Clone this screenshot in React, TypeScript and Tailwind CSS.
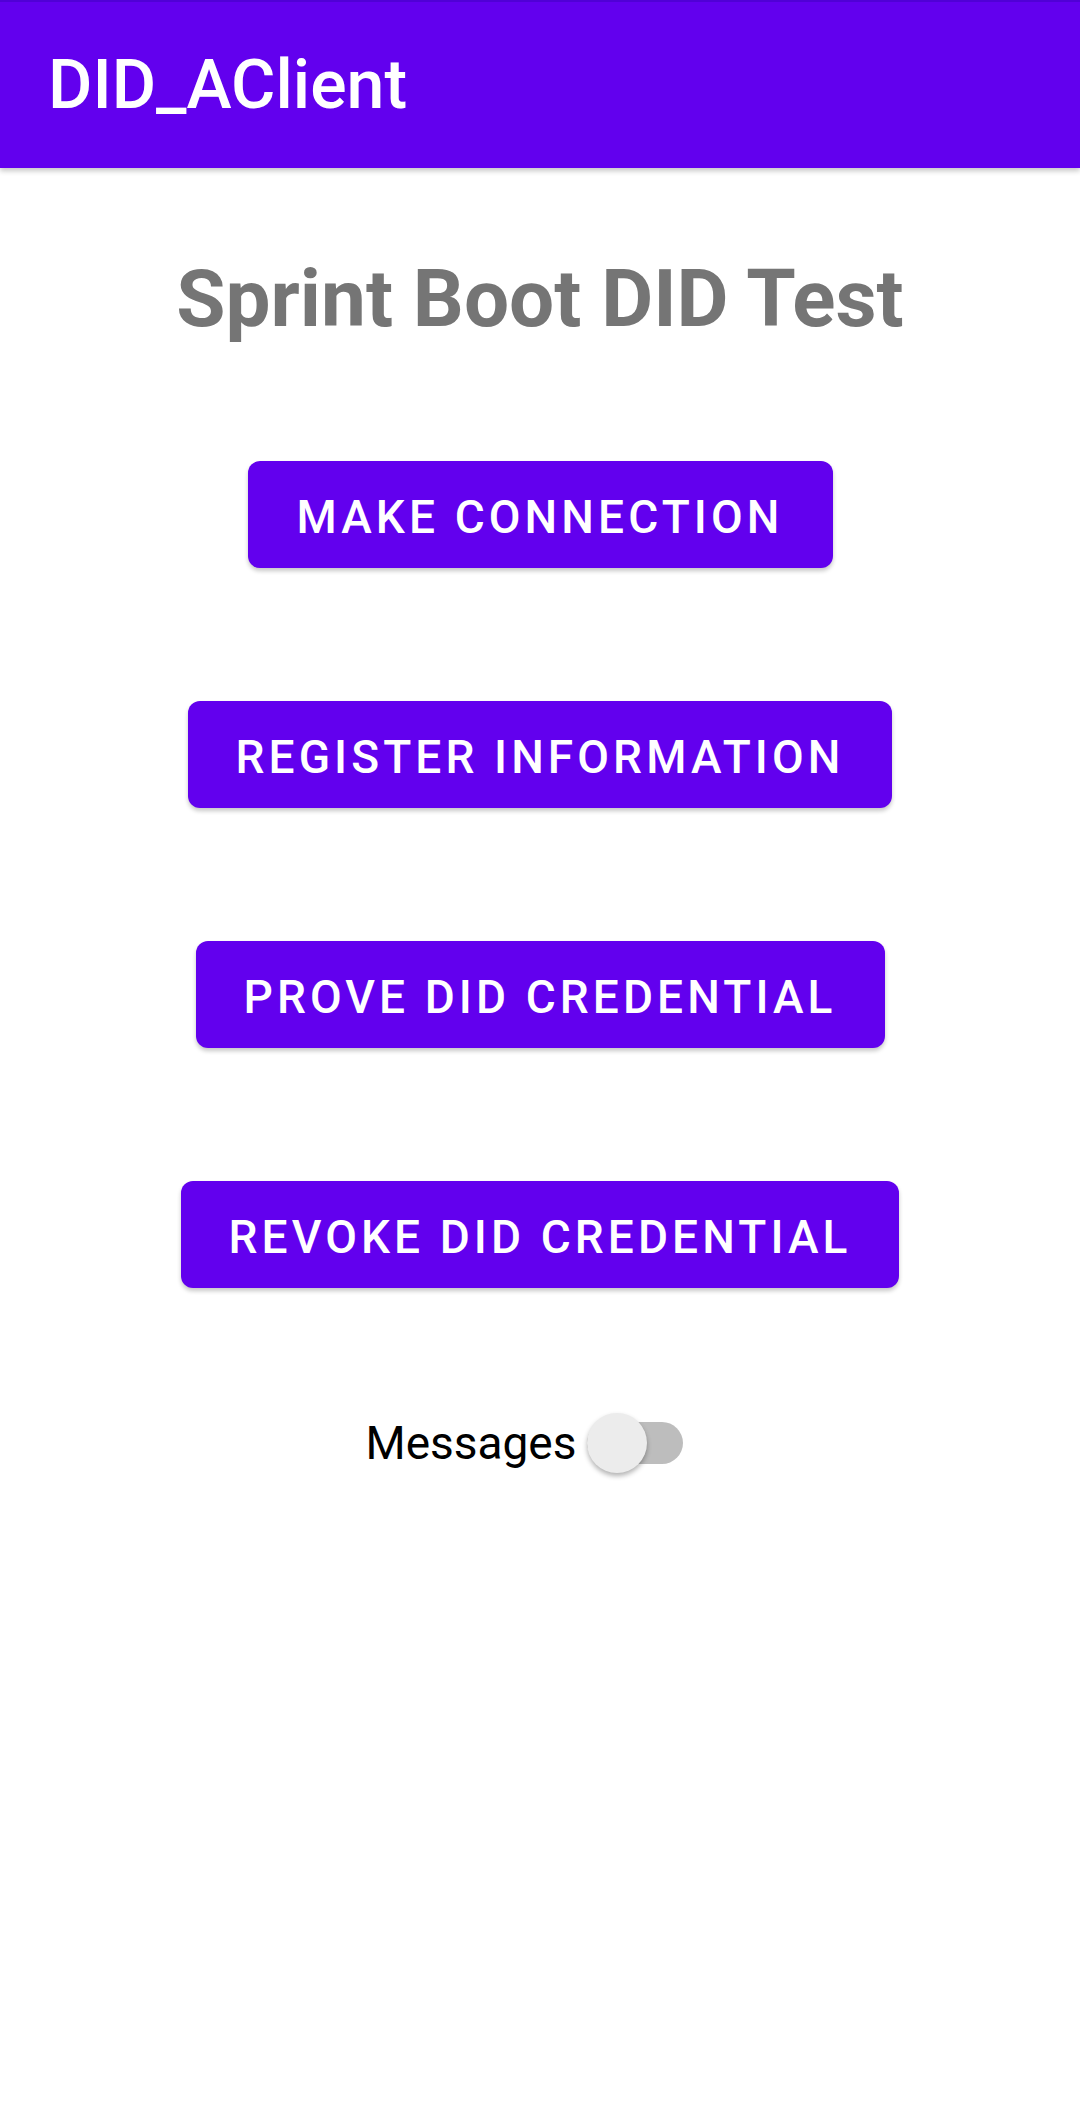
import React from "react";

const buttons = [
  { label: "MAKE CONNECTION", w: "w-[585px]" },
  { label: "REGISTER INFORMATION", w: "w-[704px]" },
  { label: "PROVE DID CREDENTIAL", w: "w-[689px]" },
  { label: "REVOKE DID CREDENTIAL", w: "w-[718px]" },
];

export default function App() {
  return (
    <div className="min-h-[2116px] w-[1080px] bg-white font-['Roboto',sans-serif]">
      <header className="relative z-10 flex h-[168px] items-center border-t-2 border-[#5000d6] bg-[#6200EE] pl-[48px] shadow-[0_3px_5px_rgba(0,0,0,0.22)]">
        <h1 className="text-[68px] leading-none font-medium text-white">DID_AClient</h1>
      </header>
      <main className="flex flex-col items-center">
        <h2 className="mt-[91px] text-[80px] leading-none font-bold text-[#757575]">Sprint Boot DID Test</h2>
        <div className="mt-[122px] flex flex-col items-center gap-[133px]">
          {buttons.map((b) => (
            <button
              key={b.label}
              className={`${b.w} flex h-[107px] items-center justify-center rounded-[12px] bg-[#6200EE] pt-[4px] text-[46px] leading-none font-medium tracking-[0.0892em] text-white shadow-[0_3px_4px_rgba(0,0,0,0.22)]`}
            >
              {b.label}
            </button>
          ))}
        </div>
        <div className="mt-[125px] flex h-[60px] items-center pr-[32px]">
          <span className="text-[46px] leading-none text-black">Messages</span>
          <div className="relative ml-[10px] h-[60px] w-[96px]">
            <div className="absolute top-[9px] left-0 h-[42px] w-[96px] rounded-full bg-[#bdbdbd]" />
            <div className="absolute top-0 left-0 h-[60px] w-[60px] rounded-full bg-[#ececec] shadow-[0_3px_5px_rgba(0,0,0,0.3)]" />
          </div>
        </div>
      </main>
    </div>
  );
}
